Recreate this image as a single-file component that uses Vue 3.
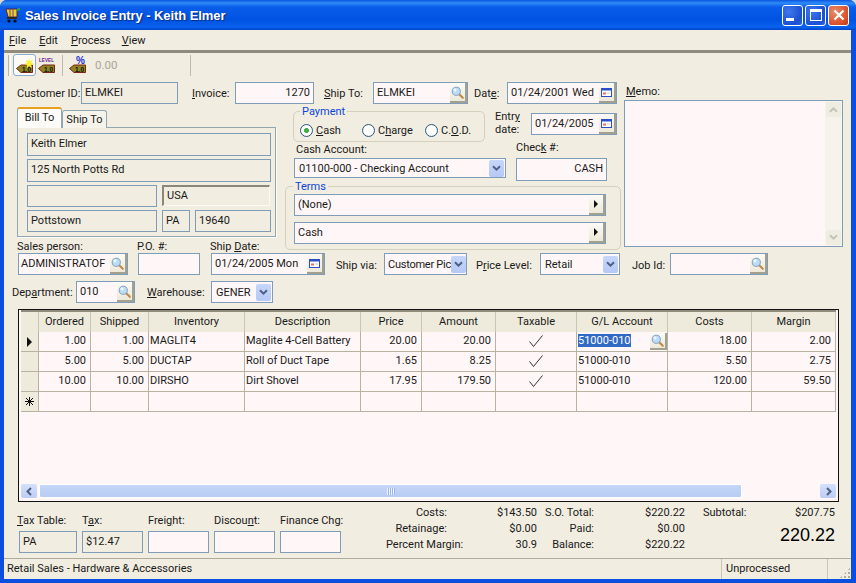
<script setup>
const columns = [
  { name: 'Ordered', width: 52, cls: 'num' },
  { name: 'Shipped', width: 58, cls: 'num' },
  { name: 'Inventory', width: 96, cls: '' },
  { name: 'Description', width: 116, cls: '' },
  { name: 'Price', width: 61, cls: 'num' },
  { name: 'Amount', width: 74, cls: 'num' },
  { name: 'Taxable', width: 81, cls: 'mid' },
  { name: 'G/L Account', width: 91, cls: '' },
  { name: 'Costs', width: 84, cls: 'num' },
  { name: 'Margin', width: 84, cls: 'num' }
]

const rows = [
  { marker: 'arrow', cells: ['1.00', '1.00', 'MAGLIT4', 'Maglite 4-Cell Battery', '20.00', '20.00', 'check', '51000-010', '18.00', '2.00'] },
  { marker: '', cells: ['5.00', '5.00', 'DUCTAP', 'Roll of Duct Tape', '1.65', '8.25', 'check', '51000-010', '5.50', '2.75'] },
  { marker: '', cells: ['10.00', '10.00', 'DIRSHO', 'Dirt Shovel', '17.95', '179.50', 'check', '51000-010', '120.00', '59.50'] },
  { marker: 'star', cells: ['', '', '', '', '', '', '', '', '', ''] }
]
</script>

<template>
  <div class="window">
    <svg class="defs" width="0" height="0">
      <symbol id="lens" viewBox="0 0 16 16">
        <line x1="9.5" y1="9.5" x2="14.5" y2="14.5" stroke="#c08a48" stroke-width="2.6" stroke-linecap="round" />
        <circle cx="6.5" cy="6.5" r="5" fill="#bcdcf6" stroke="#7f9cc0" stroke-width="1.2" />
        <circle cx="5" cy="5" r="1.8" fill="#eef7ff" />
      </symbol>
      <symbol id="cal" viewBox="0 0 11 9">
        <rect x="0.5" y="0.5" width="10" height="8" fill="#fff" stroke="#2b4fc8" />
        <rect x="0.5" y="0.5" width="10" height="2" fill="#2b4fc8" />
        <rect x="2" y="4.5" width="3" height="2" fill="#e8705a" />
        <rect x="6" y="4.5" width="3" height="1" fill="#c4cce8" />
      </symbol>
      <symbol id="chev" viewBox="0 0 9 7">
        <path d="M1 1.2 L4.5 4.7 L8 1.2" fill="none" stroke="#4d6185" stroke-width="2" />
      </symbol>
      <symbol id="chev-gray" viewBox="0 0 9 7">
        <path d="M1 1.2 L4.5 4.7 L8 1.2" fill="none" stroke="#c4c4b6" stroke-width="2" />
      </symbol>
    </svg>

    <header class="titlebar">
      <svg class="app-icon" viewBox="0 0 16 15" width="16" height="15">
        <path d="M1 1h11v8H3z" fill="#e8d420" stroke="#5a2040" />
        <path d="M5 1v8M8 1v8" stroke="#7a3a90" />
        <path d="M12 2l3-1" stroke="#20b050" stroke-width="2" />
        <rect x="2" y="9" width="10" height="2" fill="#302818" />
        <circle cx="4" cy="13" r="1.6" fill="#111" />
        <circle cx="10" cy="13" r="1.6" fill="#111" />
      </svg>
      <span class="title">Sales Invoice Entry - Keith Elmer</span>
      <div class="caption-btns">
        <button class="cap"><span class="min-glyph"></span></button>
        <button class="cap"><span class="max-glyph"></span></button>
        <button class="cap close">
          <svg viewBox="0 0 12 12" width="12" height="12"><path d="M1.5 1.5l9 9M10.5 1.5l-9 9" stroke="#fff" stroke-width="2.2" /></svg>
        </button>
      </div>
    </header>

    <nav class="menubar">
      <span class="menu m-file"><u>F</u>ile</span>
      <span class="menu m-edit"><u>E</u>dit</span>
      <span class="menu m-process"><u>P</u>rocess</span>
      <span class="menu m-view"><u>V</u>iew</span>
    </nav>

    <div class="toolbar">
      <span class="grip"></span>
      <button class="tool active">
        <svg viewBox="0 0 18 20" width="18" height="20">
          <path d="M0.5 13.5L5 10h11.5v7.5H5z" fill="#8f8420" stroke="#7c2418" />
          <text x="6" y="16.5" class="tag-text">1.0</text>
          <path d="M13 3l1 3 3-1-2 2.5 3 1.5-3 1 1 3-3-2-2 2v-3l-3-1 3-1-1-3 3 1z" fill="#f8f030" />
        </svg>
      </button>
      <button class="tool">
        <svg viewBox="0 0 18 20" width="18" height="20">
          <text x="1" y="7" class="level-text" textLength="15" lengthAdjust="spacingAndGlyphs">LEVEL</text>
          <path d="M0.5 13.5L5 10h11.5v7.5H5z" fill="#8f8420" stroke="#7c2418" />
          <text x="6" y="16.5" class="tag-text">1.0</text>
        </svg>
      </button>
      <span class="tool-sep"></span>
      <button class="tool">
        <svg viewBox="0 0 18 20" width="18" height="20">
          <text x="7" y="9" class="pct-text">%</text>
          <path d="M0.5 13.5L5 10h11.5v7.5H5z" fill="#8f8420" stroke="#7c2418" />
          <text x="6" y="16.5" class="tag-text">1.0</text>
        </svg>
      </button>
      <span class="tool-value">0.00</span>
      <span class="tool-sep end"></span>
    </div>

    <main class="form">
      <div class="top">
        <div class="top-main">
          <div class="row row-one">
            <label class="w64">Customer ID:</label>
            <div class="box ro w97">ELMKEI</div>
            <label class="ml14 w43"><u>I</u>nvoice:</label>
            <div class="box w79 right">1270</div>
            <label class="ml10 w49"><u>S</u>hip To:</label>
            <div class="box w95">ELMKEI
              <button class="lookup"><svg width="13" height="13"><use href="#lens" /></svg></button>
            </div>
            <label class="ml6 w33">Dat<u>e</u>:</label>
            <div class="box w110">01/24/2001 Wed
              <button class="lookup"><svg width="11" height="9"><use href="#cal" /></svg></button>
            </div>
          </div>

          <div class="columns">
            <section class="address">
              <div class="tabs">
                <span class="tab on">Bill To</span>
                <span class="tab">Ship To</span>
              </div>
              <div class="panel">
                <div class="box ro tall">Keith Elmer</div>
                <div class="box ro tall">125 North Potts Rd</div>
                <div class="addr-row">
                  <div class="box ro w130"></div>
                  <div class="box sunken w108">USA</div>
                </div>
                <div class="addr-row">
                  <div class="box ro w130">Pottstown</div>
                  <div class="box ro w28">PA</div>
                  <div class="box ro w76">19640</div>
                </div>
              </div>
            </section>

            <section class="middle">
              <div class="pay-row">
                <fieldset class="group payment">
                  <legend>Payment</legend>
                  <div class="radios">
                    <div class="opt w62"><span class="radio on"></span><u>C</u>ash</div>
                    <div class="opt w63"><span class="radio"></span>C<u>h</u>arge</div>
                    <div class="opt"><span class="radio"></span>C.<u>O</u>.D.</div>
                  </div>
                </fieldset>
                <label class="entry-label">Entr<u>y</u><br />date:</label>
                <div class="box entry">01/24/2005
                  <button class="lookup"><svg width="11" height="9"><use href="#cal" /></svg></button>
                </div>
              </div>

              <div class="cash-row">
                <div class="stack cash">
                  <label>Cash Account:</label>
                  <div class="box combo w212">01100-000 - Checking Account
                    <span class="drop"><svg width="9" height="7"><use href="#chev" /></svg></span>
                  </div>
                </div>
                <div class="stack check">
                  <label>Chec<u>k</u> #:</label>
                  <div class="box w91 right check-box">CASH</div>
                </div>
              </div>

              <fieldset class="group terms">
                <legend>Terms</legend>
                <div class="box term">(None)<button class="lookup arrow-btn"><span class="tri"></span></button></div>
                <div class="box term">Cash<button class="lookup arrow-btn"><span class="tri"></span></button></div>
              </fieldset>
            </section>
          </div>
        </div>

        <aside class="memo">
          <label><u>M</u>emo:</label>
          <div class="memo-box">
            <div class="memo-scroll">
              <span class="sb-end"><svg class="flip" width="9" height="7"><use href="#chev-gray" /></svg></span>
              <span class="sb-end"><svg width="9" height="7"><use href="#chev-gray" /></svg></span>
            </div>
          </div>
        </aside>
      </div>

      <div class="row row-sales">
        <div class="stack">
          <label>Sales person:</label>
          <div class="box w110 tight">ADMINISTRATOF
            <button class="lookup"><svg width="13" height="13"><use href="#lens" /></svg></button>
          </div>
        </div>
        <div class="stack ml10">
          <label>P.O. #:</label>
          <div class="box w62"></div>
        </div>
        <div class="stack ml11">
          <label>Ship <u>D</u>ate:</label>
          <div class="box w114">01/24/2005 Mon
            <button class="lookup"><svg width="11" height="9"><use href="#cal" /></svg></button>
          </div>
        </div>
        <label class="ml11 w48">Ship via:</label>
        <div class="box combo w83 squeezed">Customer Pic
          <span class="drop"><svg width="9" height="7"><use href="#chev" /></svg></span>
        </div>
        <label class="ml9 w64">P<u>r</u>ice Level:</label>
        <div class="box combo w80">Retail
          <span class="drop"><svg width="9" height="7"><use href="#chev" /></svg></span>
        </div>
        <label class="ml12 w38">Job Id:</label>
        <div class="box w98">
          <button class="lookup"><svg width="13" height="13"><use href="#lens" /></svg></button>
        </div>
      </div>

      <div class="row row-dept">
        <label class="w64">Dep<u>a</u>rtment:</label>
        <div class="box w59">010
          <button class="lookup"><svg width="13" height="13"><use href="#lens" /></svg></button>
        </div>
        <label class="ml12 w64"><u>W</u>arehouse:</label>
        <div class="box combo w62">GENER
          <span class="drop"><svg width="9" height="7"><use href="#chev" /></svg></span>
        </div>
      </div>

      <div class="grid-frame">
        <div class="grid-head">
          <span class="corner"></span>
          <span v-for="col in columns" :key="col.name" class="head-cell" :style="{ width: col.width + 'px' }">{{ col.name }}</span>
        </div>
        <div class="grid-body">
          <div v-for="(row, r) in rows" :key="r" class="grid-row">
            <span class="marker">
              <span v-if="row.marker === 'arrow'" class="tri"></span>
              <svg v-if="row.marker === 'star'" viewBox="0 0 9 9" width="9" height="9">
                <path d="M4.5 0v9M0 4.5h9M1 1l7 7M8 1l-7 7" stroke="#111" stroke-width="1" />
              </svg>
            </span>
            <span
              v-for="(cell, c) in row.cells"
              :key="c"
              class="cell"
              :class="columns[c].cls"
              :style="{ width: columns[c].width + 'px' }"
            >
              <svg v-if="cell === 'check'" viewBox="0 0 14 12" width="14" height="12">
                <path d="M0.5 6.5l4 5L13.5 0.5" fill="none" stroke="#333" stroke-width="1" />
              </svg>
              <template v-else-if="r === 0 && c === 7">
                <span class="selected">{{ cell }}</span>
                <button class="lookup"><svg width="13" height="13"><use href="#lens" /></svg></button>
              </template>
              <template v-else>{{ cell }}</template>
            </span>
          </div>
        </div>
        <div class="hscroll">
          <span class="sb-btn"><svg viewBox="0 0 9 9" width="9" height="9"><path d="M6 1L2.5 4.5 6 8" fill="none" stroke="#4d6185" stroke-width="2" /></svg></span>
          <span class="sb-thumb"><span class="sb-lines"></span></span>
          <span class="sb-btn"><svg viewBox="0 0 9 9" width="9" height="9"><path d="M3 1l3.5 3.5L3 8" fill="none" stroke="#4d6185" stroke-width="2" /></svg></span>
        </div>
      </div>

      <div class="bottom">
        <div class="charges">
          <div class="stack charge first">
            <label><u>T</u>ax Table:</label>
            <div class="box ro w58">PA</div>
          </div>
          <div class="stack charge">
            <label>T<u>a</u>x:</label>
            <div class="box ro w61">$12.47</div>
          </div>
          <div class="stack charge">
            <label>Frei<u>g</u>ht:</label>
            <div class="box w61"></div>
          </div>
          <div class="stack charge">
            <label>Discou<u>n</u>t:</label>
            <div class="box w61"></div>
          </div>
          <div class="stack charge">
            <label>Finance Chg:</label>
            <div class="box w61"></div>
          </div>
        </div>
        <div class="totals">
          <span class="t-l inset">Costs:</span><span class="t-v">$143.50</span>
          <span class="t-l2">S.O. Total:</span><span class="t-v2">$220.22</span>
          <span class="t-l inset">Retainage:</span><span class="t-v">$0.00</span>
          <span class="t-l2">Paid:</span><span class="t-v2">$0.00</span>
          <span class="t-l">Percent Margin:</span><span class="t-v">30.9</span>
          <span class="t-l2">Balance:</span><span class="t-v2">$220.22</span>
        </div>
        <div class="grand">
          <div class="sub"><span>Subtotal:</span><span>$207.75</span></div>
          <div class="big">220.22</div>
        </div>
      </div>
    </main>

    <footer class="statusbar">
      <span class="status-main">Retail Sales - Hardware &amp; Accessories</span>
      <span class="status-state">Unprocessed</span>
      <span class="status-grip"></span>
    </footer>
  </div>
</template>

<style>
html, body {
  margin: 0;
  background: #d8d8d0;
}
</style>

<style scoped>
* {
  box-sizing: border-box;
}

.window {
  --face: repeating-conic-gradient(#f3efe3 0 25%, #efebde 0 50%) 0 0 / 2px 2px;
  width: 856px;
  height: 583px;
  display: flex;
  flex-direction: column;
  padding: 0 5px 4px 4px;
  overflow: hidden;
  border-radius: 7px 7px 0 0;
  background: #0a4fe0;
  font-family: Roboto, "Liberation Sans", sans-serif;
  font-size: 11px;
  color: #1a1a1a;
}

.defs {
  position: absolute;
}

.titlebar {
  height: 30px;
  flex: none;
  margin: 0 -5px 0 -4px;
  padding-left: 5px;
  display: flex;
  align-items: center;
  background: linear-gradient(#0a55e0 0, #2f8cf6 3px, #0a5cea 7px, #0053e2 20px, #0a62ee 27px, #0044c8 30px);
}

.app-icon {
  flex: none;
}

.title {
  margin-left: 4px;
  font-family: "Liberation Sans", sans-serif;
  font-size: 13px;
  font-weight: bold;
  letter-spacing: -0.08px;
  color: #fff;
  text-shadow: 1px 1px 1px #0a2a80;
}

.caption-btns {
  margin-left: auto;
  margin-right: 7px;
  display: flex;
  gap: 2px;
}

.cap {
  width: 21px;
  height: 21px;
  padding: 0;
  display: flex;
  align-items: center;
  justify-content: center;
  border: 1px solid #fff;
  border-radius: 3px;
  background: radial-gradient(circle at 30% 30%, #3f78ee, #1a4fd0 70%, #2d68e6);
}

.cap.close {
  background: radial-gradient(circle at 30% 30%, #e88a68, #d9502a 70%, #c23a18);
}

.min-glyph {
  width: 8px;
  height: 3px;
  margin: 9px 6px 0 0;
  background: #fff;
}

.max-glyph {
  width: 12px;
  height: 12px;
  border: 1px solid #fff;
  border-top-width: 3px;
}

.menubar {
  height: 20px;
  flex: none;
  display: flex;
  align-items: center;
  background: var(--face);
}

.m-file { margin-left: 5px; }
.m-edit { margin-left: 13px; }
.m-process { margin-left: 13px; }
.m-view { margin-left: 11px; }

.toolbar {
  height: 27px;
  flex: none;
  display: flex;
  align-items: center;
  border-top: 3px solid #8f8c7e;
  background: var(--face);
}

.grip {
  width: 3px;
  height: 21px;
  margin-left: 4px;
  border-left: 1px solid #b9b5a5;
  border-right: 1px solid #fff;
}

.tool {
  width: 18px;
  height: 22px;
  flex: none;
  padding: 0;
  display: flex;
  align-items: center;
  justify-content: center;
  border: none;
  background: none;
}

.tool.active {
  width: 23px;
  margin: 0 2px;
  border: 1px solid #8cabd0;
  border-radius: 3px;
  background: #fbfaf6;
}

.tag-text {
  font-family: "Liberation Sans", sans-serif;
  font-size: 6.5px;
  font-weight: bold;
  fill: #111;
}

.level-text {
  font-family: "Liberation Sans", sans-serif;
  font-size: 6px;
  font-weight: bold;
  fill: #6a1a90;
}

.pct-text {
  font-family: "Liberation Sans", sans-serif;
  font-size: 10px;
  font-weight: bold;
  fill: #1a30d0;
}

.tool-sep {
  width: 1px;
  height: 21px;
  flex: none;
  margin: 0 6px;
  background: #c0bcac;
}

.tool-sep.end {
  margin-left: 73px;
}

.tool-value {
  width: 22px;
  flex: none;
  margin-left: 8px;
  color: #a9a698;
  font-size: 11.5px;
}

.form {
  flex: 1;
  min-height: 0;
  display: flex;
  flex-direction: column;
  padding: 5px 0 0 13px;
  background: var(--face);
}

.top {
  display: flex;
}

.top-main {
  width: 605px;
  flex: none;
}

.row {
  display: flex;
  align-items: center;
}

.row-one {
  height: 22px;
}

label {
  white-space: nowrap;
  flex: none;
}

.stack {
  display: flex;
  flex-direction: column;
  flex: none;
}

.box {
  height: 22px;
  flex: none;
  display: flex;
  align-items: center;
  padding: 0 2px 2px 3px;
  border: 1px solid #7f9db9;
  background: #fff7f7;
  white-space: nowrap;
  overflow: hidden;
}

.box.right {
  justify-content: flex-end;
  padding-right: 3px;
}

.box.ro {
  background: none;
}

.box.tall {
  height: 23px;
}

.box.sunken {
  height: 21px;
  border-style: solid;
  border-color: #8a8878 #fbfaf4 #fbfaf4 #8a8878;
  border-width: 2px 1px 1px 2px;
  background: none;
}

.lookup {
  width: 17px;
  height: 20px;
  flex: none;
  padding: 0;
  margin: 0 -2px -2px auto;
  display: flex;
  align-items: center;
  justify-content: center;
  border: none;
  border-right: 2px solid #a3a090;
  border-bottom: 2px solid #a3a090;
  background: linear-gradient(#fbfaf6, #ece9d8);
}

.box.combo {
  padding: 0 1px 0 4px;
}

.box.squeezed {
  padding-left: 3px;
  letter-spacing: -0.25px;
}

.drop {
  width: 15px;
  height: 17px;
  margin-left: auto;
  flex: none;
  display: flex;
  align-items: center;
  justify-content: center;
  border-radius: 2px;
  background: linear-gradient(#c6d6fb, #b5c9f6);
}

.tri {
  width: 0;
  height: 0;
  border-left: 5px solid #111;
  border-top: 5px solid transparent;
  border-bottom: 5px solid transparent;
}

.w28 { width: 28px; }
.w33 { width: 33px; }
.w38 { width: 38px; }
.w43 { width: 43px; }
.w48 { width: 48px; }
.w49 { width: 49px; }
.w58 { width: 58px; }
.w59 { width: 59px; }
.w61 { width: 61px; }
.w62 { width: 62px; }
.w63 { width: 63px; }
.w64 { width: 64px; }
.w76 { width: 76px; }
.w79 { width: 79px; }
.w80 { width: 80px; }
.w83 { width: 83px; }
.w91 { width: 91px; }
.w95 { width: 95px; }
.w97 { width: 97px; }
.w98 { width: 98px; }
.w108 { width: 108px; }
.w110 { width: 110px; }
.w114 { width: 114px; }
.w130 { width: 130px; }
.w212 { width: 212px; }

.ml6 { margin-left: 6px; }
.ml9 { margin-left: 9px; }
.ml10 { margin-left: 10px; }
.ml11 { margin-left: 11px; }
.ml12 { margin-left: 12px; }
.ml14 { margin-left: 14px; }

.columns {
  display: flex;
  margin-top: 3px;
}

.address {
  width: 259px;
  flex: none;
}

.tabs {
  height: 20px;
  display: flex;
  align-items: flex-end;
}

.tab {
  width: 45px;
  height: 18px;
  margin-bottom: -1px;
  padding-top: 2px;
  text-align: center;
  border: 1px solid #91a7b4;
  border-bottom: none;
  border-radius: 3px 3px 0 0;
  background: #f6f4ea;
}

.tab.on {
  height: 21px;
  position: relative;
  z-index: 1;
  padding-top: 2px;
  border-top: 2px solid #e8a020;
  background: #fcfbf7;
}

.panel {
  height: 110px;
  display: flex;
  flex-direction: column;
  gap: 3px;
  padding: 5px 4px 0 9px;
  border: 1px solid #91a7b4;
  box-shadow: 1px 1px 0 #fdfcf8;
}

.panel .box.tall {
  width: 244px;
}

.addr-row {
  display: flex;
  gap: 5px;
}

.middle {
  width: 337px;
  margin-left: 9px;
  flex: none;
}

.pay-row {
  display: flex;
  align-items: flex-start;
  height: 35px;
}

.group {
  margin: 0;
  padding: 0;
  border: 1px solid #d3d1bd;
  border-radius: 5px;
}

.group legend {
  padding: 0 2px;
  color: #0a46d8;
  background: #f1ede0;
}

.payment {
  width: 192px;
  height: 36px;
  margin: -1px 0 0 8px;
  flex: none;
}

.payment legend {
  margin-left: 6px;
  line-height: 11px;
}

.radios {
  height: 22px;
  margin-top: 2px;
  padding-left: 6px;
  display: flex;
  align-items: center;
}

.opt {
  display: flex;
  align-items: center;
  white-space: nowrap;
}

.radio {
  width: 13px;
  height: 13px;
  flex: none;
  margin-right: 3px;
  border: 1px solid #2c5a86;
  border-radius: 50%;
  background: radial-gradient(circle, #fff 55%, #d9d8cc);
}

.radio.on {
  background: radial-gradient(circle, #3fb040 0 28%, #fff 34% 55%, #d9d8cc);
}

.entry-label {
  margin: 3px 0 0 10px;
  width: 36px;
  line-height: 13px;
}

.box.entry {
  width: 86px;
  margin-top: 6px;
}

.cash-row {
  display: flex;
  margin-top: 1px;
  height: 37px;
}

.stack.cash {
  margin-left: 9px;
}

.stack.cash label {
  margin-left: 2px;
  line-height: 13px;
  height: 15px;
}

.box.combo.w212 {
  height: 20px;
}

.stack.check {
  margin-left: 10px;
  margin-top: -2px;
}

.stack.check label {
  line-height: 13px;
  height: 17px;
}

.box.check-box {
  height: 23px;
}

.terms {
  width: 336px;
  height: 70px;
  padding: 1px 0 0 8px;
}

.terms legend {
  margin-left: -1px;
  line-height: 13px;
}

.box.term {
  width: 312px;
  height: 22px;
  margin-bottom: 6px;
}

.arrow-btn {
  width: 16px;
}

.arrow-btn .tri {
  border-left-width: 4px;
  border-top-width: 4px;
  border-bottom-width: 4px;
}

.memo {
  width: 219px;
  margin-left: 2px;
  padding-top: 1px;
  display: flex;
  flex-direction: column;
}

.memo label {
  line-height: 17px;
  margin-left: 2px;
}

.memo-box {
  height: 147px;
  display: flex;
  justify-content: flex-end;
  border: 1px solid #7f9db9;
  background: #fff7f7;
}

.memo-scroll {
  width: 17px;
  display: flex;
  flex-direction: column;
  justify-content: space-between;
  padding: 1px;
  background: #f5f3ec;
}

.sb-end {
  height: 15px;
  display: flex;
  align-items: center;
  justify-content: center;
  border-radius: 2px;
  background: #eeede2;
}

.flip {
  transform: scaleY(-1);
}

.row-sales {
  margin-top: -10px;
  height: 35px;
  align-items: flex-end;
  margin-left: 1px;
}

.row-sales .stack label {
  line-height: 13px;
  margin-left: -1px;
}

.row-sales > label {
  height: 19px;
  line-height: 19px;
}

.box.tight {
  padding-left: 2px;
}

.row-dept {
  margin-top: 6px;
  height: 22px;
  margin-left: -5px;
}

.grid-frame {
  width: 821px;
  height: 193px;
  margin-top: 6px;
  margin-left: 1px;
  flex: none;
  display: flex;
  flex-direction: column;
  border: 1px solid #111;
  padding: 0 2px 3px;
  background: #fff7f7;
}

.grid-head {
  height: 22px;
  flex: none;
  display: flex;
  border-top: 2px solid #8f8c7e;
  background: #eeebdc;
}

.corner {
  width: 18px;
  flex: none;
  border-right: 1px solid #c9c6b4;
}

.head-cell {
  flex: none;
  text-align: center;
  line-height: 19px;
  border-right: 1px solid #c9c6b4;
}

.grid-body {
  flex: 1;
  min-height: 0;
}

.grid-row {
  height: 20px;
  display: flex;
}

.marker {
  width: 18px;
  flex: none;
  display: flex;
  align-items: center;
  justify-content: center;
  border-right: 1px solid #b6b3a0;
  border-bottom: 1px solid #b6b3a0;
  background: #eeebdc;
}

.cell {
  flex: none;
  display: flex;
  align-items: center;
  padding: 0 1px 2px;
  border-right: 1px solid #b6b3a0;
  border-bottom: 1px solid #b6b3a0;
  white-space: nowrap;
  overflow: hidden;
}

.cell.num {
  justify-content: flex-end;
  padding-right: 4px;
}

.cell.mid {
  justify-content: center;
}

.cell .lookup {
  height: 17px;
  margin: 0 -1px -1px auto;
}

.selected {
  background: #316ac5;
  color: #fff;
}

.hscroll {
  height: 14px;
  flex: none;
  display: flex;
  gap: 2px;
}

.sb-btn {
  width: 16px;
  flex: none;
  display: flex;
  align-items: center;
  justify-content: center;
  border-radius: 2px;
  background: linear-gradient(#d4e0fb, #bccdf6);
}

.sb-thumb {
  flex: 1;
  margin-right: 76px;
  display: flex;
  align-items: center;
  justify-content: center;
  border-radius: 2px;
  border: 1px solid #fff;
  background: linear-gradient(#c4d6f8, #b8ccf4);
}

.sb-lines {
  width: 8px;
  height: 7px;
  background: repeating-linear-gradient(90deg, #eef3fe 0 1px, #9db6e8 1px 2px);
}

.bottom {
  flex: 1;
  display: flex;
  align-items: flex-start;
  margin-top: 3px;
}

.charges {
  display: flex;
  gap: 5px;
  margin-top: 9px;
  flex: none;
}

.charge {
  width: 61px;
}

.charge label {
  line-height: 13px;
  height: 14px;
}

.charge.first {
  width: 60px;
}

.charge.first .box {
  margin-left: 2px;
}

.charge .box {
  margin-top: 3px;
}

.totals {
  display: grid;
  grid-template-columns: 75px 76px 57px 91px;
  grid-auto-rows: 16px;
  margin-left: 45px;
  flex: none;
  line-height: 16px;
}

.t-l,
.t-v,
.t-l2,
.t-v2 {
  text-align: right;
  white-space: nowrap;
}

.t-l.inset {
  padding-right: 14px;
}

.grand {
  width: 132px;
  margin-left: 18px;
  flex: none;
}

.sub {
  display: flex;
  justify-content: space-between;
  line-height: 16px;
}

.big {
  margin-top: 3px;
  text-align: right;
  font-family: "Liberation Sans", sans-serif;
  font-size: 18px;
  line-height: 22px;
  color: #000;
}

.statusbar {
  height: 21px;
  flex: none;
  display: flex;
  align-items: center;
  border-top: 1px solid #b0ac9c;
  background: var(--face);
}

.status-main {
  width: 717px;
  padding: 0 0 1px 3px;
}

.status-state {
  width: 107px;
  height: 100%;
  padding-left: 4px;
  line-height: 20px;
  border-left: 1px solid #c9c6b4;
  border-right: 1px solid #c9c6b4;
}

.status-grip {
  flex: 1;
  height: 100%;
  display: flex;
  align-items: flex-end;
  justify-content: flex-end;
}

.status-grip::after {
  content: "";
  width: 12px;
  height: 12px;
  background: radial-gradient(circle, #b0ac9c 40%, transparent 50%) right bottom / 4px 4px;
  clip-path: polygon(100% 0, 100% 100%, 0 100%);
}
</style>
